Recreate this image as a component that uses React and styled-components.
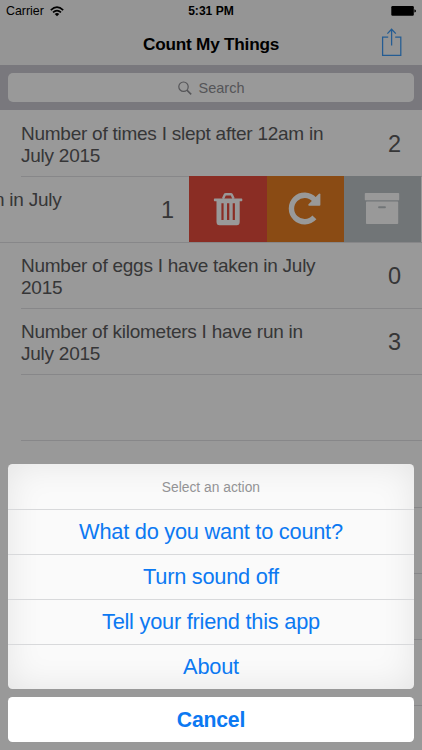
import React from "react";
import styled, { createGlobalStyle } from "styled-components";

const GlobalStyle = createGlobalStyle`
  * { box-sizing: border-box; }
  body { margin: 0; font-family: "Liberation Sans", Arial, sans-serif; }
  button { font: inherit; border: 0; padding: 0; margin: 0; background: none; }
`;

const Screen = styled.main`
  position: relative;
  width: 422px;
  height: 750px;
  overflow: hidden;
  background: #fff;
`;

const Header = styled.header`
  height: 65px;
  background: #f8f8f8;
  color: #000;
`;

const StatusBar = styled.div`
  display: grid;
  grid-template-columns: 1fr auto 1fr;
  align-items: center;
  height: 22px;
  padding: 0 6px;
`;

const Carrier = styled.div`
  display: flex;
  align-items: center;
  gap: 6px;
  font-size: 12.4px;
`;

const Clock = styled.time`
  font-size: 12.1px;
  font-weight: bold;
`;

const BatteryIcon = styled.svg`
  justify-self: end;
`;

const NavBar = styled.div`
  display: grid;
  grid-template-columns: 1fr auto 1fr;
  align-items: center;
  height: 43px;
  padding: 0 19px;
`;

const Title = styled.h1`
  grid-column: 2;
  margin: 0;
  font-size: 17.2px;
  line-height: 20px;
  letter-spacing: -0.22px;
`;

const ShareButton = styled.button`
  justify-self: end;
  display: flex;
  width: 23px;
  height: 31px;
`;

const SearchBar = styled.div`
  height: 45px;
  padding: 8px 8px 8px 8px;
  background: #cac9d0;
`;

const SearchField = styled.div`
  display: flex;
  align-items: center;
  justify-content: center;
  gap: 7px;
  height: 29px;
  border-radius: 5px;
  background: #fff;
  color: #8e8e93;
  font-size: 14.5px;
`;

const List = styled.ul`
  margin: 0;
  padding: 1px 0 0;
  list-style: none;
`;

const Row = styled.li`
  display: flex;
  height: 66.1px;
  margin-left: ${(p) => (p.$swiped ? 0 : "21px")};
  border-bottom: 1px solid #e2e2e5;
`;

const Label = styled.div`
  flex: none;
  width: ${(p) => (p.$swiped ? "161px" : "320px")};
  padding-top: 12px;
  font-size: 19px;
  line-height: 21.8px;
  letter-spacing: -0.25px;
  color: #5b5b5d;
  text-indent: ${(p) => (p.$swiped ? "-6px" : 0)};
  white-space: pre-line;
`;

const Count = styled.div`
  flex: none;
  width: ${(p) => (p.$swiped ? "28px" : "60px")};
  padding-top: 20px;
  padding-right: ${(p) => (p.$swiped ? "15px" : 0)};
  text-align: right;
  font-size: 23.5px;
  line-height: 27px;
  color: #5b5b5d;
`;

const Actions = styled.div`
  display: flex;
  width: 232px;
  height: 66px;
  margin-top: -1px;
`;

const Action = styled.button`
  display: flex;
  justify-content: center;
  flex: none;
  width: ${(p) => p.$width};
  padding-top: 16px;
  padding-right: 1px;
  background: ${(p) => p.$color};
`;

const Dimmer = styled.div`
  position: absolute;
  inset: 0;
  display: flex;
  flex-direction: column;
  justify-content: flex-end;
  gap: 8px;
  padding: 0 8.4px 8.5px 8.3px;
  background: rgba(0, 0, 0, 0.4);
`;

const Sheet = styled.section`
  height: 224.5px;
  border-radius: 4.5px;
  overflow: hidden;
  background: #fafafa;
  box-shadow: inset 0 0 34px rgba(0, 0, 0, 0.09);
`;

const SheetTitle = styled.div`
  height: 45px;
  text-align: center;
  color: #939395;
  font-size: 13.8px;
  line-height: 47px;
`;

const SheetButton = styled.button`
  display: block;
  width: 100%;
  height: 44.9px;
  border-top: 1px solid #d8d9db;
  color: #0c79f2;
  font-size: 21.8px;
  line-height: 44px;
  letter-spacing: -0.25px;
`;

const CancelButton = styled.button`
  height: 45px;
  flex: none;
  border-radius: 4.5px;
  background: #fff;
  color: #0c79f2;
  font-size: 21.2px;
  font-weight: bold;
  line-height: 45px;
  letter-spacing: -0.2px;
`;

const Wifi = () => (
  <svg width="14" height="11" viewBox="0 0 14 11" fill="none" stroke="#000" strokeWidth="1.6">
    <path d="M.8 4.1Q7-1.7 13.2 4.1" />
    <path d="M3 6.4Q7 2.8 11 6.4" />
    <path d="M7 10.3 4.7 8Q7 6.1 9.3 8Z" fill="#000" stroke="none" />
  </svg>
);

const Battery = () => (
  <BatteryIcon width="26" height="12" viewBox="0 0 26 12">
    <rect x="1.3" y="1" width="22.5" height="9.8" rx="1.2" />
    <path d="M24.4 4.2Q26 4.7 26 5.9T24.4 7.6Z" />
  </BatteryIcon>
);

const Share = () => (
  <svg width="23" height="31" viewBox="0 0 23 31" fill="none" stroke="#3c9af5" strokeWidth="1.25">
    <path d="M8.2 9H2.6V27.3h18.2V9h-5.6M11.6 17.4V1.3M7.4 5.6l4.2-4.4 4.2 4.4" />
  </svg>
);

const Magnifier = () => (
  <svg width="14" height="14" viewBox="0 0 14 14" fill="none" stroke="#8e8e93" strokeWidth="1.2">
    <circle cx="5.5" cy="5.7" r="4.7" />
    <path d="M8.9 9.1 13.2 13.4" strokeWidth="1.5" />
  </svg>
);

const Trash = () => (
  <svg width="30" height="34" viewBox="0 0 30 34">
    <path
      d="M10 6.8 11.7 3Q12 2.3 13 2.3h4.6q1 0 1.3.7l1.7 3.8"
      fill="none"
      stroke="#fff"
      strokeWidth="2.4"
    />
    <path
      fill="#fff"
      fillRule="evenodd"
      d="M1.6 6.6h27q.7 0 .7.7v1.2q0 .7-.7.7h-1.9v20.6q0 3.5-3 3.5H6.5q-3 0-3-3.5V9.2H1.6q-.7 0-.7-.7V7.3q0-.7.7-.7ZM8.4 11.3v16.6h2.2V11.3ZM14 11.3v16.6h2.3V11.3ZM19.7 11.3v16.6h2.2V11.3Z"
    />
  </svg>
);

const Repeat = () => (
  <svg width="34" height="34" viewBox="0 0 34 34">
    <path d="M26.4 7.6A13.2 13.2 0 1 0 26.4 25.4" fill="none" stroke="#fff" strokeWidth="5.4" />
    <path d="M32.4 2.5v10.3q0 1-1 1H21.2q-1.7-.2-.7-1.5L30.7 1.9q1.5-1 1.7.6Z" fill="#fff" />
  </svg>
);

const Archive = () => (
  <svg width="36" height="34" viewBox="0 0 36 34" fill="#fff">
    <rect x=".8" y=".9" width="34.4" height="7.4" rx=".9" />
    <path
      fillRule="evenodd"
      d="M2.8 9.5h30.7q.7 0 .7.7v21.1q0 .8-.8.8H2.8q-.8 0-.8-.8V10.2q0-.7.8-.7ZM15 14.2q-.9 0-.9 1t.9 1h6q.9 0 .9-1t-.9-1Z"
    />
  </svg>
);

const rows = [
  { text: "Number of times I slept after 12am in\nJuly 2015", count: 2 },
  { text: "n in July", count: 1, swiped: true },
  { text: "Number of eggs I have taken in July\n2015", count: 0 },
  { text: "Number of kilometers I have run in\nJuly 2015", count: 3 },
];

const emptyRows = [0, 1, 2, 3, 4];

const choices = ["What do you want to count?", "Turn sound off", "Tell your friend this app", "About"];

export default function App() {
  return (
    <Screen>
      <GlobalStyle />
      <Header>
        <StatusBar>
          <Carrier>
            Carrier <Wifi />
          </Carrier>
          <Clock>5:31 PM</Clock>
          <Battery />
        </StatusBar>
        <NavBar>
          <Title>Count My Things</Title>
          <ShareButton aria-label="Share">
            <Share />
          </ShareButton>
        </NavBar>
      </Header>
      <SearchBar>
        <SearchField>
          <Magnifier />
          Search
        </SearchField>
      </SearchBar>
      <List>
        {rows.map((row) => (
          <Row key={row.text} $swiped={row.swiped}>
            <Label $swiped={row.swiped}>{row.text}</Label>
            <Count $swiped={row.swiped}>{row.count}</Count>
            {row.swiped && (
              <Actions>
                <Action $width="78px" $color="#e74c3c" aria-label="Delete">
                  <Trash />
                </Action>
                <Action $width="77px" $color="#e67e22" aria-label="Reset">
                  <Repeat />
                </Action>
                <Action $width="77px" $color="#bdc3c7" aria-label="Archive">
                  <Archive />
                </Action>
              </Actions>
            )}
          </Row>
        ))}
        {emptyRows.map((n) => (
          <Row key={n} />
        ))}
      </List>
      <Dimmer>
        <Sheet>
          <SheetTitle>Select an action</SheetTitle>
          {choices.map((choice) => (
            <SheetButton key={choice}>{choice}</SheetButton>
          ))}
        </Sheet>
        <CancelButton>Cancel</CancelButton>
      </Dimmer>
    </Screen>
  );
}
